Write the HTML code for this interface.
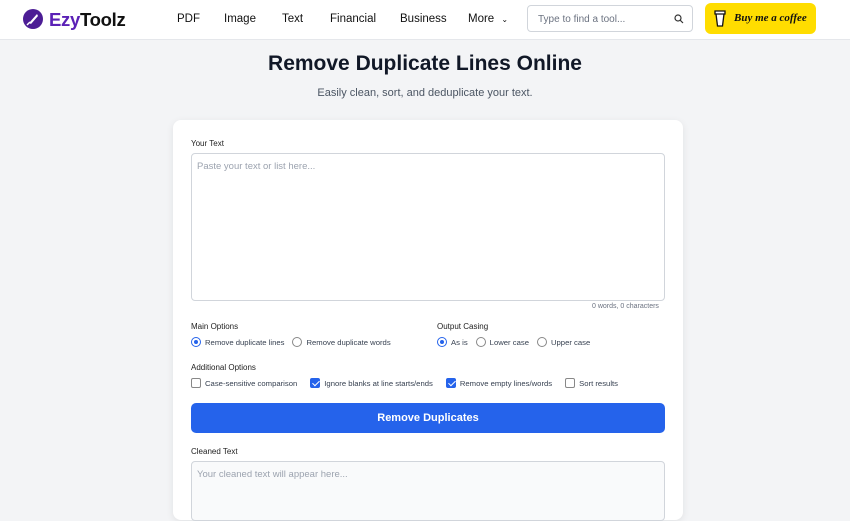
<!DOCTYPE html><html><head><style>
*{box-sizing:border-box;margin:0;padding:0}
body{width:850px;height:494px;overflow:hidden;background:#f3f4f6;font-family:"Liberation Sans",sans-serif;color:#1f2937;position:relative}
.hdr{position:absolute;left:0;top:0;width:850px;height:40px;background:#fff;border-bottom:1px solid #e5e7eb}
.a{position:absolute}
.nav{font-size:11.5px;color:#111;top:13px}
.card{position:absolute;left:173px;top:120px;width:510px;height:400px;background:#fff;border-radius:8px;box-shadow:0 2px 8px rgba(0,0,0,.08)}
.lbl{font-size:8px;color:#222}
.opt{font-size:7.7px;color:#374151;display:flex;align-items:center}
.r{width:10px;height:10px;border:1px solid #888;border-radius:50%;margin-right:4px;display:inline-block;position:relative}
.r.on{border-color:#2563eb}.r.on:after{content:"";position:absolute;left:2px;top:2px;width:4px;height:4px;border-radius:50%;background:#2563eb}
.c{width:10px;height:10px;border:1px solid #888;border-radius:2px;margin-right:4px;display:inline-block;position:relative}
.c.on{background:#2563eb;border-color:#2563eb}.c.on:after{content:"";position:absolute;left:3px;top:0px;width:3px;height:6px;border:solid #fff;border-width:0 1.5px 1.5px 0;transform:rotate(45deg)}
</style></head><body>
<div class="hdr">
<svg class="a" style="left:22px;top:8px" width="22" height="22" viewBox="0 0 22 22"><circle cx="11" cy="11" r="10" fill="#4c1d95"/><path d="M7 15 L15 6 L16 8 L9 16Z" fill="#fff"/><path d="M5 17l3-3" stroke="#fff" stroke-width="1.5"/></svg>
<div class="a" style="left:49px;top:9px;font-size:18.5px;font-weight:bold;letter-spacing:-.3px"><span style="color:#5b21b6">Ezy</span><span style="color:#111">Toolz</span></div>
<div class="a nav" style="left:177px">PDF</div>
<div class="a nav" style="left:224px">Image</div>
<div class="a nav" style="left:282px">Text</div>
<div class="a nav" style="left:330px">Financial</div>
<div class="a nav" style="left:400px">Business</div>
<div class="a nav" style="left:468px">More <span style="font-size:8px;margin-left:4px">⌄</span></div>
<div class="a" style="left:527px;top:5px;width:166px;height:27px;border:1px solid #d1d5db;border-radius:4px;font-size:10px;color:#6b7280;padding:8px 10px">Type to find a tool...</div>
<svg class="a" style="left:674px;top:14px" width="10" height="10" viewBox="0 0 10 10"><circle cx="4" cy="4" r="3" fill="none" stroke="#333" stroke-width="1.2"/><path d="M6.3 6.3L9 9" stroke="#333" stroke-width="1.2"/></svg>
<div class="a" style="left:705px;top:3px;width:111px;height:31px;background:#ffdd00;border-radius:6px"></div>
<svg class="a" style="left:713px;top:8px" width="14" height="20" viewBox="0 0 14 20"><path d="M2 3h10v3H2zM3 6l1.5 12h5L11 6" fill="#fff" stroke="#111" stroke-width="1.3"/></svg>
<div class="a" style="left:734px;top:12px;font-size:11px;font-weight:bold;font-style:italic;color:#111;font-family:'Liberation Serif',serif">Buy me a coffee</div>
</div>
<div class="a" style="left:0;width:850px;top:52px;text-align:center;font-size:21px;font-weight:bold;color:#111827">Remove Duplicate Lines Online</div>
<div class="a" style="left:0;width:850px;top:87px;text-align:center;font-size:11px;color:#4b5563">Easily clean, sort, and deduplicate your text.</div>
<div class="card"></div>
<div class="a lbl" style="left:191px;top:139px">Your Text</div>
<div class="a" style="left:191px;top:153px;width:474px;height:148px;border:1px solid #d1d5db;border-radius:4px;font-size:9.5px;color:#9ca3af;padding:7px 5px">Paste your text or list here...</div>
<div class="a" style="left:592px;top:303px;font-size:7px;color:#6b7280">0 words, 0 characters</div>
<div class="a lbl" style="left:191px;top:322px">Main Options</div>
<div class="a opt" style="left:191px;top:337px"><span class="r on"></span>Remove duplicate lines<span class="r" style="margin-left:8px"></span>Remove duplicate words</div>
<div class="a lbl" style="left:437px;top:322px">Output Casing</div>
<div class="a opt" style="left:437px;top:337px"><span class="r on"></span>As is<span class="r" style="margin-left:8px"></span>Lower case<span class="r" style="margin-left:8px"></span>Upper case</div>
<div class="a lbl" style="left:191px;top:363px">Additional Options</div>
<div class="a opt" style="left:191px;top:378px"><span class="c"></span>Case-sensitive comparison<span class="c on" style="margin-left:13px"></span>Ignore blanks at line starts/ends<span class="c on" style="margin-left:13px"></span>Remove empty lines/words<span class="c" style="margin-left:13px"></span>Sort results</div>
<div class="a" style="left:191px;top:403px;width:474px;height:30px;background:#2563eb;border-radius:5px;color:#fff;font-size:11px;font-weight:bold;text-align:center;line-height:30px">Remove Duplicates</div>
<div class="a lbl" style="left:191px;top:447px">Cleaned Text</div>
<div class="a" style="left:191px;top:461px;width:474px;height:60px;border:1px solid #d1d5db;border-radius:4px;background:#f9fafb;font-size:9.5px;color:#9ca3af;padding:7px 5px">Your cleaned text will appear here...</div>
</body></html>
